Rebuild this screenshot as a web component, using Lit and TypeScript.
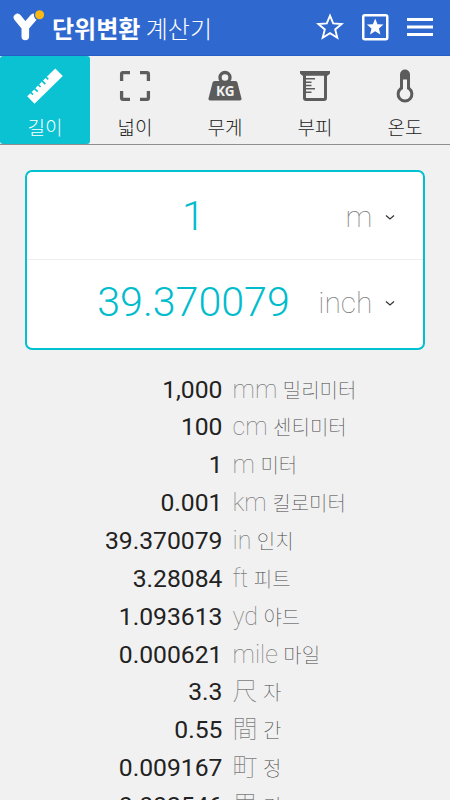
import { LitElement, html, css, svg } from "lit";
import { customElement } from "lit/decorators.js";

const ruler = svg`<svg width="42" height="42" viewBox="0 0 42 42"><path fill="#fff" d="M3.200 31.200 L6.400 28.200 l2 2 1.200-1.200-2-2 2.600-2.600 2.900 2.900 1.200-1.200-2.900-2.900 2.600-2.600 2 2 1.200-1.200-2-2 2.600-2.600 2.900 2.900 1.200-1.200-2.900-2.900 2.600-2.600 2 2 1.200-1.200-2-2L31.300 3.600 38.800 11 10.500 38.800Z"/></svg>`;
const area = svg`<svg width="42" height="42" viewBox="0 0 42 42"><path fill="none" stroke="#5c5c5c" stroke-width="3.300" d="M7.600 16V9q0-1.400 1.400-1.400H16M26 7.600h7q1.400 0 1.400 1.400V16M34.400 26v7q0 1.400-1.400 1.400H26M16 34.400H9q-1.400 0-1.400-1.400V26"/></svg>`;
const weight = svg`<svg width="42" height="42" viewBox="0 0 42 42"><circle cx="21" cy="12.500" r="5" fill="none" stroke="#5c5c5c" stroke-width="3.400"/><path fill="#5c5c5c" d="M10.500 16h21q1.500 0 1.900 1.500l4.100 16q.4 2-1.600 2H6.100q-2 0-1.600-2L8.600 17.500Q9 16 10.500 16Z"/><text x="21.200" y="31" text-anchor="middle" font-family="Noto Sans, sans-serif" font-weight="700" font-size="14.500" textLength="18.500" lengthAdjust="spacingAndGlyphs" fill="#f1f1f1">KG</text></svg>`;
const beaker = svg`<svg width="42" height="42" viewBox="0 0 42 42"><path fill="#5c5c5c" d="M6 6h30v2.500l-2.500 2.200H8.500L6 8.500Z"/><path fill="none" stroke="#5c5c5c" stroke-width="3" d="M10.500 9v24q0 1.500 1.500 1.500h18q1.500 0 1.500-1.500V9"/><path stroke="#5c5c5c" stroke-width="1.500" d="M12 13.700h9M12 17.200h5.500M12 20.400h5.500M12 23.700h9M12 27.200h5.500"/></svg>`;
const thermo = svg`<svg width="42" height="42" viewBox="0 0 42 42"><path fill="#5c5c5c" d="M16 9.500a5 5 0 0 1 10 0v12.800a8.400 8.400 0 1 1-10 0Z"/><path fill="#f1f1f1" d="M19 14.500h4v9.600a5.400 5.400 0 1 1-4 0Z"/></svg>`;

const tabs = [
  { label: "길이", icon: ruler, on: true },
  { label: "넓이", icon: area },
  { label: "무게", icon: weight },
  { label: "부피", icon: beaker },
  { label: "온도", icon: thermo },
];

const rows = [
  ["1,000", "mm", "밀리미터"],
  ["100", "cm", "센티미터"],
  ["1", "m", "미터"],
  ["0.001", "km", "킬로미터"],
  ["39.370079", "in", "인치"],
  ["3.28084", "ft", "피트"],
  ["1.093613", "yd", "야드"],
  ["0.000621", "mile", "마일"],
  ["3.3", "尺", "자"],
  ["0.55", "間", "간"],
  ["0.009167", "町", "정"],
  ["0.002546", "里", "리"],
];

@customElement("app-root")
export class AppRoot extends LitElement {
  static styles = css`
    :host { display: block; height: 800px; overflow: hidden; background: #f1f1f1; font-family: Roboto, "Noto Sans CJK KR", sans-serif; }
    * { box-sizing: border-box; }
    svg { display: block; flex: none; }
    header { height: 56px; background: #2f69d0; border-bottom: 1px solid #2460c4; display: flex; align-items: center; padding: 0 16px 0 12px; color: #fff; }
    h1 { margin: 0 0 0 5px; font: 700 24px/54px "Noto Sans CJK KR", sans-serif; flex: 1; white-space: nowrap; }
    h1 span { font-weight: 300; }
    .actions { display: flex; gap: 17px; align-items: center; padding-bottom: 2px; }
    nav { display: flex; height: 89px; border-bottom: 1px solid #8e8e8e; background: #f0f0f0; }
    .tab { flex: 1; display: flex; flex-direction: column; align-items: center; padding-top: 9px; height: 88px; border-radius: 3px; color: #222; font: 300 19px/28px "Noto Sans CJK KR", sans-serif; }
    .tab.on { background: #0bc2d3; color: #fff; }
    .tab span { margin-top: 6px; }
    .card { margin: 25px 25px 0; height: 180px; background: #fff; border: 2px solid #00c0d1; border-radius: 7px; }
    .field { height: 87px; display: grid; grid-template-columns: 193px 70px 10px; column-gap: 12.500px; padding-left: 70px; align-items: center; }
    .field + .field { border-top: 1px solid #eee; height: 85px; }
    .value { text-align: center; color: #00bccd; font-size: 41.200px; font-weight: 300; line-height: 50px; white-space: nowrap; }
    .unit { text-align: right; color: #808080; font-weight: 100; font-size: 30px; line-height: 40px; padding-top: 2px; white-space: nowrap; }
    .chevron { margin-top: 3px; }
    ul { list-style: none; margin: 20.600px 0 0; padding: 0; }
    li { height: 37.85px; display: grid; grid-template-columns: 222.500px 1fr; column-gap: 10px; align-items: baseline; line-height: 37px; white-space: nowrap; }
    .num { text-align: right; font-size: 24.700px; font-weight: 400; color: #222; }
    .name { font-size: 25px; font-weight: 100; color: #7c7c7c; }
    .name span { font: 100 20px/20px "Noto Sans CJK KR", sans-serif; color: #444; margin-left: -0.500px; }
  `;

  private chevron() {
    return html`<svg class="chevron" width="10" height="7" viewBox="0 0 10 7"><path d="M1 1.500 5 5 9 1.500" fill="none" stroke="#333" stroke-width="1.200"/></svg>`;
  }

  render() {
    return html`
      <header>
        <svg class="logo" width="35" height="36" viewBox="0 0 35 36"><path d="M5.500 7.500 13.300 17 21.500 7.500M13.300 16v10.500" fill="none" stroke="#fff" stroke-width="7.600" stroke-linecap="round" stroke-linejoin="round"/><circle cx="27.600" cy="4.800" r="5.800" fill="#2f69d0"/><circle cx="27.600" cy="4.800" r="4.500" fill="#fdb813"/></svg>
        <h1>단위변환 <span>계산기</span></h1>
        <div class="actions">
          <svg width="28" height="28" viewBox="0 0 28 28"><path d="M14 2.700 17.200 10.400 25.700 11 19.200 16.400 21.300 24.700 14 20.200 6.700 24.700 8.800 16.400 2.300 11 10.800 10.400Z" fill="none" stroke="#fff" stroke-width="1.900"/></svg>
          <svg width="28" height="28" viewBox="0 0 28 28"><rect x="2.250" y="2.250" width="24" height="24" rx="1.500" fill="none" stroke="#fff" stroke-width="2.500"/><path d="M14.200 5.500 16.500 11.200 22.500 11.600 17.900 15.500 19.400 21.500 14.200 18.200 9 21.500 10.500 15.500 5.900 11.600 11.900 11.200Z" fill="#fff"/></svg>
          <svg width="28" height="28" viewBox="0 0 28 28"><path d="M1 6.500h26M1 14h26M1 21.500h26" stroke="#fff" stroke-width="3"/></svg>
        </div>
      </header>
      <nav>${tabs.map((t) => html`<div class="tab ${t.on ? "on" : ""}">${t.icon}<span>${t.label}</span></div>`)}</nav>
      <section class="card">
        <div class="field"><div class="value">1</div><div class="unit">m</div>${this.chevron()}</div>
        <div class="field"><div class="value">39.370079</div><div class="unit">inch</div>${this.chevron()}</div>
      </section>
      <ul>${rows.map(([n, u, k]) => html`<li><span class="num">${n}</span><span class="name">${u} <span>${k}</span></span></li>`)}</ul>
    `;
  }
}
